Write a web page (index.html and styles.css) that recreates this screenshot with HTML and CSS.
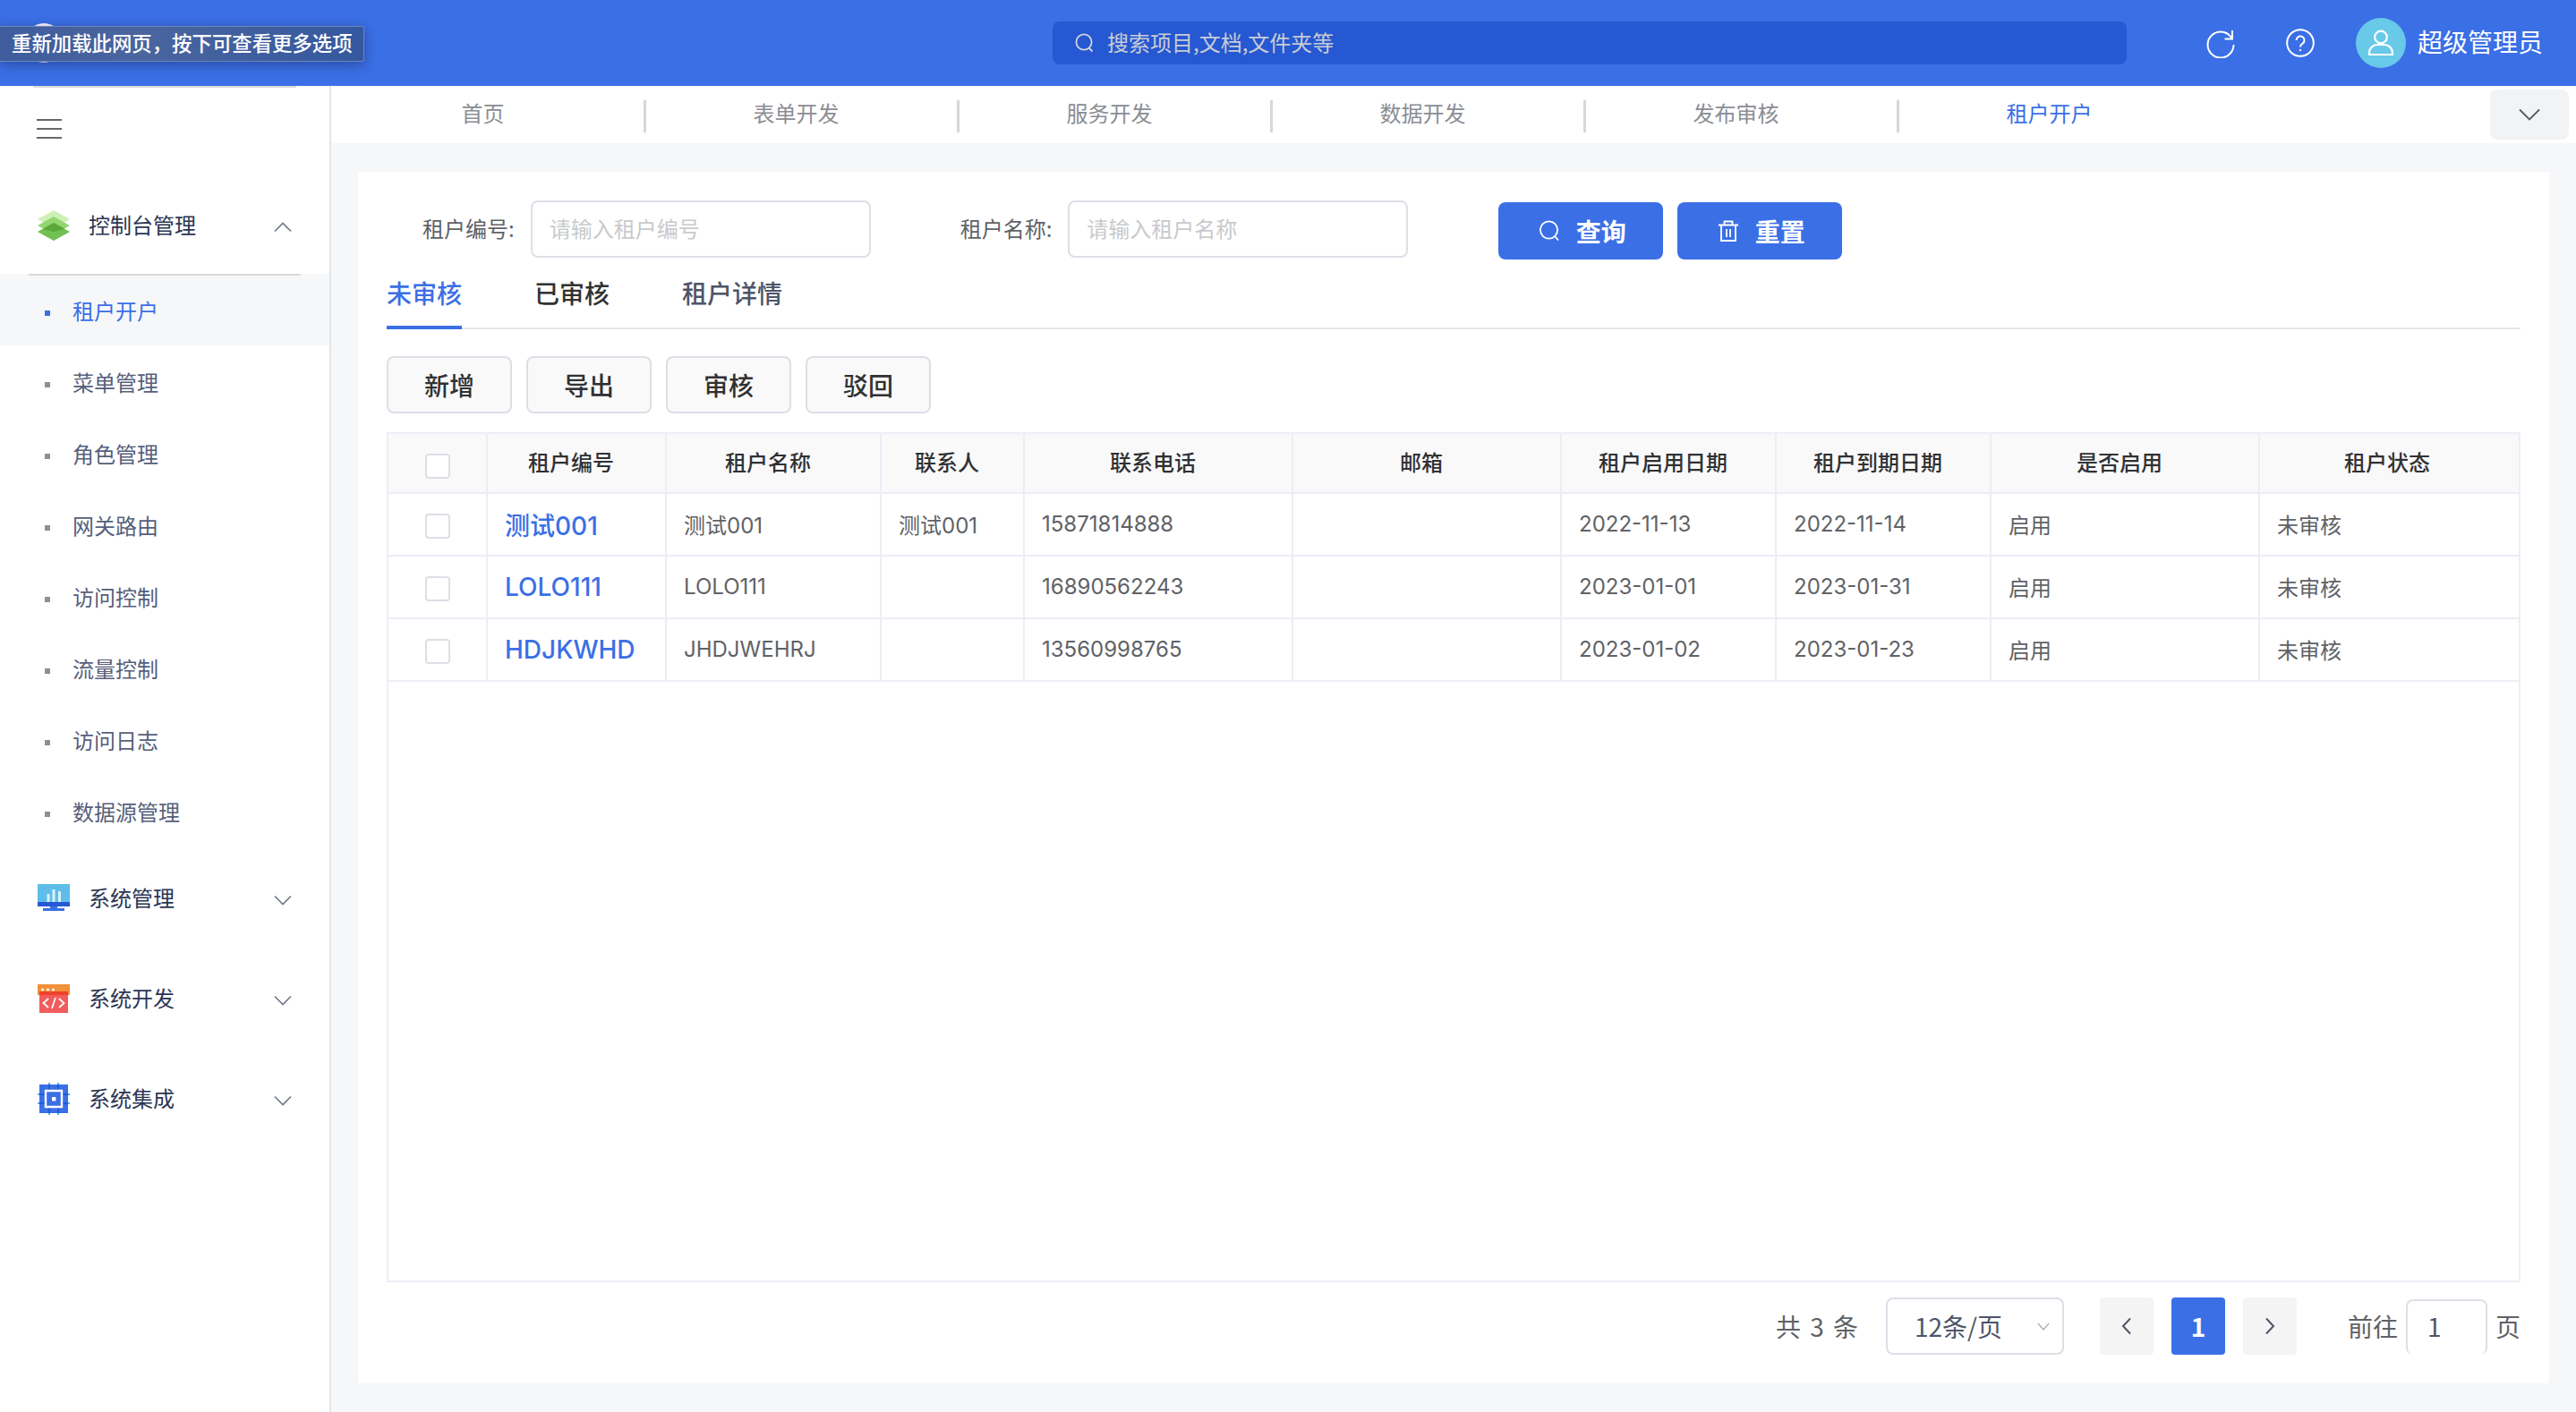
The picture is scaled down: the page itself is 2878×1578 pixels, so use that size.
FILE: index.html
```html
<!DOCTYPE html>
<html lang="zh-CN">
<head>
<meta charset="utf-8">
<title>租户开户</title>
<link rel="stylesheet" href="styles.css">
</head>
<body>
<div class="app">
  <header class="topbar">
    <svg class="logo" width="44" height="44" viewBox="0 0 44 44"><circle cx="22" cy="22" r="22" fill="#fff"/></svg>
    <div class="tip">重新加载此网页，按下可查看更多选项</div>
    <div class="search">
      <svg class="i-search" width="22" height="22" viewBox="0 0 22 22" fill="none" stroke="#d3d6de" stroke-width="1.8"><circle cx="10" cy="10" r="8.6"/><path d="M15.5 16.5l4 4"/></svg>
      <span>搜索项目,文档,文件夹等</span>
    </div>
    <svg class="i-refresh" width="34" height="34" viewBox="0 0 34 34" fill="none" stroke="#fff" stroke-width="2"><path d="M31.5 19A14.5 14.5 0 1 1 17 4.500c5 0 10 3 13 8"/><path d="M30 3v9.500h-8.500"/></svg>
    <svg class="i-help" width="32" height="32" viewBox="0 0 32 32" fill="none" stroke="#fff" stroke-width="2"><circle cx="16" cy="16" r="14.800"/><path d="M11.500 13a4.500 4.500 0 1 1 7 3.700c-1.600 1-2.500 1.900-2.500 3.800"/><circle cx="16" cy="24" r=".8" fill="#fff" stroke-width="1"/></svg>
    <div class="avatar">
      <svg width="56" height="56" viewBox="0 0 56 56" fill="none" stroke="#fff" stroke-width="2.200"><circle cx="28" cy="21.500" r="6.800"/><path d="M15 41v-2a9 9 0 0 1 9-9h8a9 9 0 0 1 9 9v2z"/></svg>
    </div>
    <span class="username">超级管理员</span>
  </header>
  <div class="body">
    <aside class="sidebar">
      <div class="toprule"></div>
      <div class="burger"><i></i><i></i><i></i></div>
      <div class="menu-head">
        <svg class="menu-icon" width="36" height="36" viewBox="0 0 36 36"><path d="M18 1l18 10-18 10L0 11z" fill="#cdf1b4"/><path d="M18 8l18 10-18 10L0 18z" fill="#93d56f"/><path d="M18 15l18 10-18 10L0 25z" fill="#72c052"/><path d="M18 15l12.600 7L18 25 5.400 22z" fill="#5ca837"/></svg>
        <span>控制台管理</span>
        <svg class="chev" width="20" height="12" viewBox="0 0 20 12" fill="none" stroke="#6f7689" stroke-width="1.600"><path d="M1 10.500l9-9 9 9"/></svg>
      </div>
      <ul class="items">
        <li class="item active"><b></b>租户开户</li>
        <li class="item"><b></b>菜单管理</li>
        <li class="item"><b></b>角色管理</li>
        <li class="item"><b></b>网关路由</li>
        <li class="item"><b></b>访问控制</li>
        <li class="item"><b></b>流量控制</li>
        <li class="item"><b></b>访问日志</li>
        <li class="item"><b></b>数据源管理</li>
      </ul>
      <div class="menu-head">
        <svg class="menu-icon" width="36" height="32" viewBox="0 0 36 32"><path d="M0 0h36v21H0z" fill="#5ebee9"/><path d="M0 20h36v5H0z" fill="#2559d6"/><path d="M14 25h8v3h-8z" fill="#3b6fe6"/><path d="M6 27h24v3H6z" fill="#3b6fe6"/><path d="M10.500 11h3v9h-3zM16.500 6h3v14h-3zM23 8h3v12h-3z" fill="#d9f1fb"/></svg>
        <span>系统管理</span>
        <svg class="chev" width="20" height="12" viewBox="0 0 20 12" fill="none" stroke="#6f7689" stroke-width="1.600"><path d="M1 1.500l9 9 9-9"/></svg>
      </div>
      <div class="menu-head">
        <svg class="menu-icon" width="36" height="32" viewBox="0 0 36 32"><path d="M0 0h36v12H0z" fill="#f1913a"/><path d="M2 8h32v24H2z" fill="#f25c5c"/><path d="M2 8h32v4H2z" fill="#ee4329"/><circle cx="5.500" cy="6" r="1.500" fill="#fff"/><circle cx="11.500" cy="6" r="1.500" fill="#fff"/><circle cx="17.500" cy="6" r="1.500" fill="#fff"/><path d="M12 16l-5.500 5 5.500 5M24 16l5.500 5-5.500 5M20 15l-4 12" fill="none" stroke="#fff" stroke-width="1.800"/></svg>
        <span>系统开发</span>
        <svg class="chev" width="20" height="12" viewBox="0 0 20 12" fill="none" stroke="#6f7689" stroke-width="1.600"><path d="M1 1.500l9 9 9-9"/></svg>
      </div>
      <div class="menu-head">
        <svg class="menu-icon" width="36" height="36" viewBox="0 0 36 36"><path d="M2 2h32v32H2z" fill="#3b6fe6"/><path d="M13 0v2M23 0v2M13 34v2M23 34v2M0 13h2M0 23h2M34 13h2M34 23h2" stroke="#4fb3ea" stroke-width="2"/><path d="M13 2v6M23 2v6M13 28v6M23 28v6M2 13h6M2 23h6M28 13h6M28 23h6" stroke="#2559d6" stroke-width="2"/><path d="M9 9h18v18H9z" fill="#3b6fe6" stroke="#fff" stroke-width="2.400"/><path d="M16 16h4.400v4.400H16z" fill="#fff"/></svg>
        <span>系统集成</span>
        <svg class="chev" width="20" height="12" viewBox="0 0 20 12" fill="none" stroke="#6f7689" stroke-width="1.600"><path d="M1 1.500l9 9 9-9"/></svg>
      </div>
    </aside>
    <main class="content">
      <nav class="tabbar">
        <a class="nav">首页</a>
        <a class="nav">表单开发</a>
        <a class="nav">服务开发</a>
        <a class="nav">数据开发</a>
        <a class="nav">发布审核</a>
        <a class="nav current">租户开户</a>
        <div class="more"><svg width="24" height="14" viewBox="0 0 24 14" fill="none" stroke="#55585f" stroke-width="1.800"><path d="M1 1.500l11 11 11-11"/></svg></div>
      </nav>
      <section class="card">
        <form class="filters">
          <label class="flabel first">租户编号:</label>
          <div class="finput">请输入租户编号</div>
          <label class="flabel second">租户名称:</label>
          <div class="finput">请输入租户名称</div>
          <button class="pbtn q" type="button"><svg width="24" height="24" viewBox="0 0 24 24" fill="none" stroke="#fff" stroke-width="1.800"><circle cx="11.500" cy="11" r="9.600"/><path d="M18 18l4 4.500"/></svg>查询</button>
          <button class="pbtn r" type="button"><svg width="24" height="24" viewBox="0 0 24 24" fill="none" stroke="#fff" stroke-width="1.800"><path d="M1 5.500h22M7.500 5V1.500h9V5M4 5.500V23h16V5.500M10 10v9M14 10v9"/></svg>重置</button>
        </form>
        <div class="tabs">
          <span class="tab on">未审核</span>
          <span class="tab dark">已审核</span>
          <span class="tab">租户详情</span>
        </div>
        <div class="actions">
          <button class="abtn" type="button">新增</button>
          <button class="abtn" type="button">导出</button>
          <button class="abtn" type="button">审核</button>
          <button class="abtn" type="button">驳回</button>
        </div>
        <div class="tablewrap">
          <table class="grid">
            <colgroup><col class="c1"><col class="c2"><col class="c3"><col class="c4"><col class="c5"><col class="c6"><col class="c7"><col class="c8"><col class="c9"><col></colgroup>
            <thead>
              <tr><th><i class="cb"></i></th><th>租户编号</th><th>租户名称</th><th>联系人</th><th>联系电话</th><th>邮箱</th><th>租户启用日期</th><th>租户到期日期</th><th>是否启用</th><th>租户状态</th></tr>
            </thead>
            <tbody>
              <tr><td class="ck"><i class="cb"></i></td><td class="lnk">测试001</td><td>测试001</td><td>测试001</td><td>15871814888</td><td></td><td>2022-11-13</td><td>2022-11-14</td><td>启用</td><td>未审核</td></tr>
              <tr><td class="ck"><i class="cb"></i></td><td class="lnk">LOLO111</td><td>LOLO111</td><td></td><td>16890562243</td><td></td><td>2023-01-01</td><td>2023-01-31</td><td>启用</td><td>未审核</td></tr>
              <tr><td class="ck"><i class="cb"></i></td><td class="lnk">HDJKWHD</td><td>JHDJWEHRJ</td><td></td><td>13560998765</td><td></td><td>2023-01-02</td><td>2023-01-23</td><td>启用</td><td>未审核</td></tr>
            </tbody>
          </table>
        </div>
        <div class="pager">
          <span class="total">共 3 条</span>
          <div class="size">12条/页<svg width="14" height="9" viewBox="0 0 14 9" fill="none" stroke="#a9adb6" stroke-width="1.300"><path d="M1 1l6 7 6-7"/></svg></div>
          <div class="pg prev"><svg width="12" height="20" viewBox="0 0 12 20" fill="none" stroke="#4d5568" stroke-width="2"><path d="M10 1.500L2 10l8 8.500"/></svg></div>
          <div class="pg cur">1</div>
          <div class="pg next"><svg width="12" height="20" viewBox="0 0 12 20" fill="none" stroke="#4d5568" stroke-width="2"><path d="M2 1.500l8 8.500-8 8.500"/></svg></div>
          <span class="goto">前往</span>
          <div class="jump">1</div>
          <span class="page-unit">页</span>
        </div>
      </section>
    </main>
  </div>
</div>
</body>
</html>
```
FILE: styles.css
```css
* { box-sizing: border-box; }
html, body { margin: 0; padding: 0; }
body {
  width: 2878px;
  height: 1578px;
  overflow: hidden;
  font-family: Inter, "Noto Sans CJK SC", sans-serif;
  font-size: 24px;
  color: #606266;
  background: #f6f7f9;
}
.app { display: flex; flex-direction: column; height: 100%; }

.topbar {
  position: relative;
  flex: none;
  height: 96px;
  background: #3b6fe6;
  display: flex;
  align-items: center;
  color: #fff;
}
.logo { position: absolute; left: 27px; top: 26px; }
.tip {
  position: absolute;
  left: 0;
  top: 29px;
  width: 407px;
  height: 40px;
  padding-left: 13px;
  font: 500 22.400px/34px "Noto Sans CJK SC", sans-serif;
  white-space: nowrap;
  color: #fff;
  background: linear-gradient(90deg, #3f5c9d, #4a659e 40%, #34589f);
  border: 1px solid #6d86bb;
  border-left: 0;
  border-radius: 0 3px 3px 0;
  box-shadow: 0 3px 14px rgba(20, 30, 70, .45);
}
.search {
  margin-left: 1176px;
  width: 1200px;
  height: 48px;
  background: #2558d2;
  border-radius: 8px;
  display: flex;
  align-items: center;
  padding-left: 25px;
  gap: 14px;
  color: #c9ccd4;
  font-family: "Noto Sans CJK SC", sans-serif;
}
.search span { margin-bottom: 4px; }
.i-refresh { margin-left: 88px; }
.i-help { margin-left: 56px; }
.avatar {
  margin-left: 46px;
  width: 56px;
  height: 56px;
  border-radius: 50%;
  background: #68c9e8;
  display: flex;
}
.username {
  margin-left: 13px;
  margin-bottom: 4px;
  font: 400 28px "Noto Sans CJK SC", sans-serif;
  color: #fff;
}

.body { flex: 1; display: flex; min-height: 0; }
.sidebar {
  flex: none;
  width: 370px;
  background: #fff;
  border-right: 2px solid #e4e6eb;
  display: flex;
  flex-direction: column;
}
.toprule { height: 2px; margin: 0 37px; background: #d9d9d9; }
.burger {
  height: 96px;
  padding: 35px 0 0 41px;
  display: flex;
  flex-direction: column;
  gap: 8px;
}
.burger i { display: block; width: 28px; height: 2px; background: #686868; }
.menu-head {
  height: 112px;
  display: flex;
  align-items: center;
  padding: 0 43px 0 42px;
  color: #2b3552;
  font-family: "Noto Sans CJK SC", sans-serif;
}
.menu-head span { margin-left: 21px; }
.menu-icon { flex: none; margin-top: 4px; }
.chev { margin-left: auto; margin-right: -1px; margin-top: 8px; }
.items { list-style: none; margin: 0; padding: 0; position: relative; }
.items::before {
  content: "";
  position: absolute;
  left: 32px;
  right: 32px;
  top: 0;
  height: 2px;
  background: #d9d9d9;
}
.item {
  height: 80px;
  display: flex;
  align-items: center;
  padding-left: 50px;
  color: #56607a;
  font-family: "Noto Sans CJK SC", sans-serif;
}
.item b { width: 6px; height: 6px; margin: 8px 25px 0 0; background: #8a8f9c; }
.item.active { background: #f6f7f9; color: #3b6fe6; }
.item.active b { background: #3b6fe6; }

.content { flex: 1; min-width: 0; display: flex; flex-direction: column; }
.tabbar {
  flex: none;
  height: 64px;
  padding-left: 2px;
  background: #fff;
  display: flex;
  align-items: center;
  position: relative;
}
.nav {
  width: 350px;
  height: 36px;
  margin-top: 4px;
  padding: 0 12px 10px 0;
  display: flex;
  align-items: center;
  justify-content: center;
  color: #8a8d94;
  font-family: "Noto Sans CJK SC", sans-serif;
  border-right: 3px solid #d6d7d9;
}
.nav.current { color: #3b6fe6; border-right: 0; padding-right: 15px; }
.more {
  position: absolute;
  right: 8px;
  top: 4px;
  width: 88px;
  height: 56px;
  background: #f2f3f5;
  border-radius: 8px;
  display: flex;
  align-items: center;
  justify-content: center;
}

.card {
  flex: 1;
  margin: 32px 30px;
  padding: 32px 32px 32px;
  background: #fff;
  display: flex;
  flex-direction: column;
  min-height: 0;
}
.filters { display: flex; align-items: flex-start; height: 64px; }
.flabel {
  line-height: 62px;
  color: #606266;
  font-family: "Noto Sans CJK SC", sans-serif;
  white-space: nowrap;
  margin-right: 18px;
}
.flabel.first { margin-left: 40px; }
.flabel.second { margin-left: 100px; }
.finput {
  width: 380px;
  height: 64px;
  border: 2px solid #dcdfe6;
  border-radius: 8px;
  padding-left: 19px;
  line-height: 58px;
  color: #c8cacd;
  font-family: "Noto Sans CJK SC", sans-serif;
}
.pbtn {
  width: 184px;
  height: 64px;
  margin-top: 2px;
  padding: 0 0 0 3px;
  background: #3b6fe6;
  border: 0;
  border-radius: 8px;
  color: #fff;
  font: 700 28px "Noto Sans CJK SC", sans-serif;
  display: flex;
  align-items: center;
  justify-content: center;
  gap: 18px;
}
.pbtn.q { margin-left: 101px; }
.pbtn.r { margin-left: 16px; }

.tabs {
  flex: none;
  height: 80px;
  display: flex;
  gap: 81px;
  border-bottom: 2px solid #e4e7ed;
}
.tab {
  height: 80px;
  font: 500 28px/78px "Noto Sans CJK SC", sans-serif;
  color: #4d5568;
}
.tab.dark { color: #303133; }
.tab.on { color: #3b6fe6; border-bottom: 4px solid #3b6fe6; }

.actions { flex: none; display: flex; gap: 16px; margin-top: 30px; }
.abtn {
  width: 140px;
  height: 64px;
  background: #f9f9f9;
  border: 2px solid #dcdfe6;
  border-radius: 8px;
  color: #303133;
  font: 500 28px "Noto Sans CJK SC", sans-serif;
}

.tablewrap {
  flex: 1;
  min-height: 0;
  margin-top: 21px;
  border: 2px solid #ebeef5;
}
.grid {
  width: 100%;
  table-layout: fixed;
  border-collapse: separate;
  border-spacing: 0;
}
.c1 { width: 111px; }
.c2 { width: 200px; }
.c3 { width: 240px; }
.c4 { width: 160px; }
.c5 { width: 300px; }
.c6 { width: 300px; }
.c7 { width: 240px; }
.c8 { width: 240px; }
.c9 { width: 300px; }
.grid th {
  height: 67px;
  padding: 0 12px 4px 0;
  background: #f9f9fa;
  font: 500 24px "Noto Sans CJK SC", sans-serif;
  color: #303133;
  text-align: center;
  border-right: 2px solid #ebeef5;
  border-bottom: 2px solid #ebeef5;
}
.grid th:first-child { padding: 0; }
.grid th:last-child { padding-right: 5px; }
.grid td {
  height: 70px;
  padding: 0 0 2px 19px;
  border-right: 2px solid #ebeef5;
  border-bottom: 2px solid #ebeef5;
  color: #606266;
}
.grid th:last-child, .grid td:last-child { border-right: 0; }
.grid td.ck { padding: 2px 0 0; text-align: center; }
.grid td.lnk { padding-bottom: 0; font-size: 28px; font-weight: 500; color: #3b6fe6; }
.cb {
  display: inline-block;
  width: 28px;
  height: 28px;
  background: #fff;
  border: 2px solid #dcdfe6;
  border-radius: 4px;
  vertical-align: middle;
}

.pager {
  flex: none;
  height: 64px;
  margin-top: 17px;
  display: flex;
  align-items: center;
  justify-content: flex-end;
  font: 400 28px "Noto Sans CJK SC", Inter, sans-serif;
  color: #606266;
}
.total { word-spacing: 4px; }
.size {
  width: 199px;
  height: 64px;
  margin-left: 31px;
  border: 2px solid #dcdfe6;
  border-radius: 8px;
  padding-left: 30px;
  display: flex;
  align-items: center;
  color: #4d5568;
}
.size svg { margin-left: 39px; }
.pg {
  width: 60px;
  height: 64px;
  margin-left: 20px;
  background: #f4f4f5;
  border-radius: 4px;
  display: flex;
  align-items: center;
  justify-content: center;
}
.pg.prev { margin-left: 40px; }
.pg.cur { background: #3b6fe6; color: #fff; font-weight: 700; }
.goto { margin-left: 57px; }
.jump {
  width: 91px;
  height: 62px;
  margin: 2px 9px 0;
  border: 2px solid #dcdfe6;
  border-bottom: 0;
  border-radius: 8px;
  padding-left: 22px;
  line-height: 56px;
  color: #4d5568;
}
```
